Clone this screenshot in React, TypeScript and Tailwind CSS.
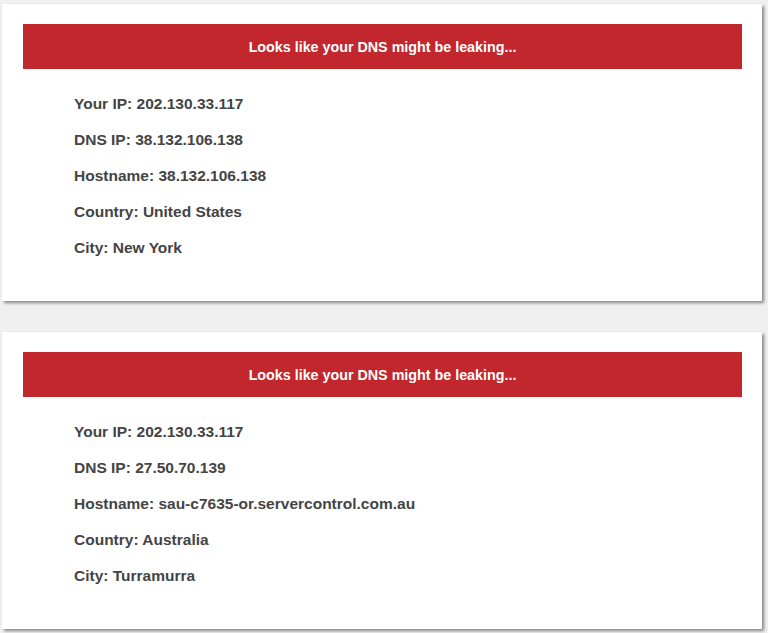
const RESULTS = [
	{
		yourIp: "202.130.33.117",
		dnsIp: "38.132.106.138",
		hostname: "38.132.106.138",
		country: "United States",
		city: "New York",
	},
	{
		yourIp: "202.130.33.117",
		dnsIp: "27.50.70.139",
		hostname: "sau-c7635-or.servercontrol.com.au",
		country: "Australia",
		city: "Turramurra",
	},
];

function LeakCard({ data }: { data: (typeof RESULTS)[number] }) {
	const rows = [
		["Your IP", data.yourIp],
		["DNS IP", data.dnsIp],
		["Hostname", data.hostname],
		["Country", data.country],
		["City", data.city],
	];
	return (
		<div className="w-[760px] h-[297px] bg-white pt-5 pl-[21px] pr-5 shadow-[2px_2px_3px_rgba(0,0,0,0.45)]">
			<div className="h-[45px] bg-[#c1272d] flex items-center justify-center pt-[2px] text-white font-bold text-[14.3px]">
				Looks like your DNS might be leaking...
			</div>
			<ul className="mt-[17px] pl-[51px] text-[#444444] font-bold text-[15.5px]">
				{rows.map(([label, value]) => (
					<li key={label} className="leading-[36px]">
						{label}: {value}
					</li>
				))}
			</ul>
		</div>
	);
}

export default function App() {
	return (
		<div
			className="min-h-[633px] bg-[#f0f0f0] pt-1 pl-[2px] flex flex-col gap-[31px]"
			style={{ fontFamily: '"Liberation Sans", Arial, sans-serif' }}
		>
			{RESULTS.map((r, i) => (
				<LeakCard key={i} data={r} />
			))}
		</div>
	);
}
